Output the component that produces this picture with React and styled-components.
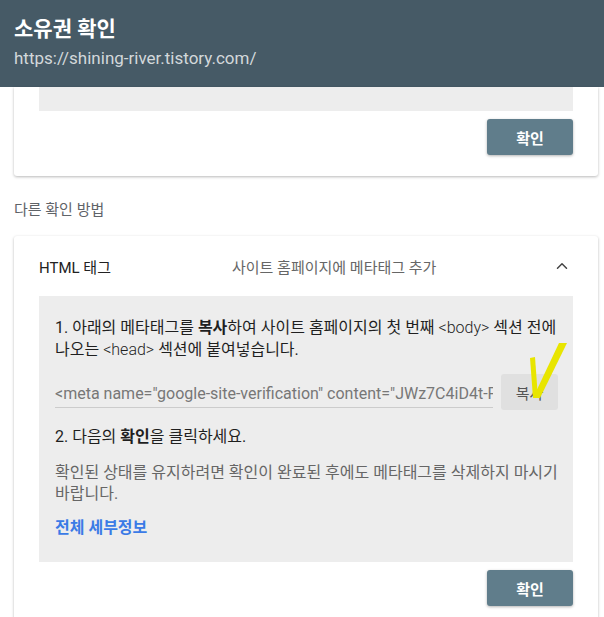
import React from "react";
import styled, { createGlobalStyle } from "styled-components";
import { ChevronUp } from "lucide-react";

const GlobalStyle = createGlobalStyle`
  html, body {
    margin: 0;
    padding: 0;
    background: #ffffff;
    font-family: Roboto, "Noto Sans CJK KR", sans-serif;
    overflow: hidden;
  }
`;

const App = () => {
  return (
    <Page>
      <GlobalStyle />
      <Header>
        <h1>소유권 확인</h1>
        <div className="url">https://shining-river.tistory.com/</div>
      </Header>
      <Content>
        <Card $top>
          <Panel $height="24px" />
          <ButtonRow>
            <PrimaryButton>확인</PrimaryButton>
          </ButtonRow>
        </Card>
        <SectionLabel>다른 확인 방법</SectionLabel>
        <Card>
          <MethodRow>
            <span className="name">HTML 태그</span>
            <span className="desc">사이트 홈페이지에 메타태그 추가</span>
            <ChevronUp size={18} strokeWidth={2} color="#444" />
          </MethodRow>
          <Panel>
            <Step>
              1. 아래의 메타태그를 <b>복사</b>하여 사이트 홈페이지의 첫 번째{" "}
              <Code>&lt;body&gt;</Code> 섹션 전에 나오는 <Code>&lt;head&gt;</Code>{" "}
              섹션에 붙여넣습니다.
            </Step>
            <CopyRow>
              <MetaInput>
                &lt;meta name="google-site-verification"
                content="JWz7C4iD4t-Fq9kK2mXbT0v" /&gt;
              </MetaInput>
              <CopyButton>복사</CopyButton>
            </CopyRow>
            <Step $gap="16px">
              2. 다음의 <b>확인</b>을 클릭하세요.
            </Step>
            <Note>
              확인된 상태를 유지하려면 확인이 완료된 후에도 메타태그를 삭제하지 마시기
              바랍니다.
            </Note>
            <DetailLink>전체 세부정보</DetailLink>
          </Panel>
          <ButtonRow>
            <PrimaryButton>확인</PrimaryButton>
          </ButtonRow>
        </Card>
      </Content>
      <Mark width="604" height="617" viewBox="0 0 604 617">
        <polygon points="530,358 535,357 538,398 533,398" fill="#e8e500" />
        <polygon points="533,398 540,398 567,343 559,343" fill="#e8e500" />
      </Mark>
    </Page>
  );
};

const Page = styled.div`
  position: relative;
  width: 604px;
  height: 617px;
  overflow: hidden;
  background: #ffffff;
`;

const Header = styled.div`
  height: 87px;
  box-sizing: border-box;
  padding: 14px 14px 0;
  background: #465a66;
  h1 {
    margin: 0;
    font-size: 21px;
    font-weight: 700;
    line-height: 30px;
    color: #ffffff;
  }
  .url {
    margin-top: 2px;
    font-size: 17px;
    line-height: 24px;
    color: #d3d8db;
  }
`;

const Content = styled.div`
  display: flex;
  flex-direction: column;
  padding: 0 6px 0 14px;
`;

const Card = styled.div`
  display: flex;
  flex-direction: column;
  padding: 0 25px 21px;
  background: #ffffff;
  border-radius: ${({ $top }) => ($top ? "0 0 3px 3px" : "3px")};
  box-shadow: 0 1px 3px rgba(0, 0, 0, 0.28);
`;

const Panel = styled.div`
  display: flex;
  flex-direction: column;
  height: ${({ $height }) => $height || "auto"};
  padding: ${({ $height }) => ($height ? "0" : "21px 4px 23px 16px")};
  background: #ededed;
  word-break: keep-all;
`;

const ButtonRow = styled.div`
  display: flex;
  justify-content: flex-end;
  margin-top: 8px;
`;

const PrimaryButton = styled.button`
  width: 86px;
  height: 36px;
  border: none;
  border-radius: 3px;
  background: #607d8b;
  color: #ffffff;
  font-family: inherit;
  font-size: 15px;
  font-weight: 700;
  box-shadow: 0 1px 3px rgba(0, 0, 0, 0.3);
`;

const SectionLabel = styled.div`
  margin: 24px 0 16px;
  font-size: 15px;
  line-height: 20px;
  color: #5f6368;
`;

const MethodRow = styled.div`
  display: flex;
  align-items: center;
  height: 60px;
  font-size: 15px;
  .name {
    width: 193px;
    color: #222222;
  }
  .desc {
    flex: 1;
    color: #666666;
  }
  svg {
    margin-right: 2px;
  }
`;

const Step = styled.div`
  margin-top: ${({ $gap }) => $gap || "0"};
  font-size: 16px;
  line-height: 22px;
  color: #1f1f1f;
  b {
    font-weight: 700;
  }
`;

const Code = styled.span`
  font-weight: 300;
`;

const CopyRow = styled.div`
  display: flex;
  align-items: center;
  gap: 8px;
  margin-top: 13px;
`;

const MetaInput = styled.div`
  flex: 1;
  min-width: 0;
  margin-top: 6px;
  padding-bottom: 2px;
  white-space: nowrap;
  overflow: hidden;
  font-size: 16px;
  line-height: 22px;
  color: #777777;
  border-bottom: 1px solid #cccccc;
`;

const CopyButton = styled.div`
  display: flex;
  align-items: center;
  justify-content: center;
  width: 57px;
  height: 36px;
  margin-right: 11px;
  border-radius: 3px;
  background: #e0e0e0;
  font-size: 15px;
  color: #555555;
`;

const Note = styled.div`
  margin-top: 14px;
  font-size: 16px;
  line-height: 21px;
  color: #666666;
`;

const DetailLink = styled.div`
  margin-top: 13px;
  font-size: 16px;
  line-height: 22px;
  font-weight: 700;
  color: #3b7be6;
`;

const Mark = styled.svg`
  position: absolute;
  top: 0;
  left: 0;
  pointer-events: none;
`;

export default App;
